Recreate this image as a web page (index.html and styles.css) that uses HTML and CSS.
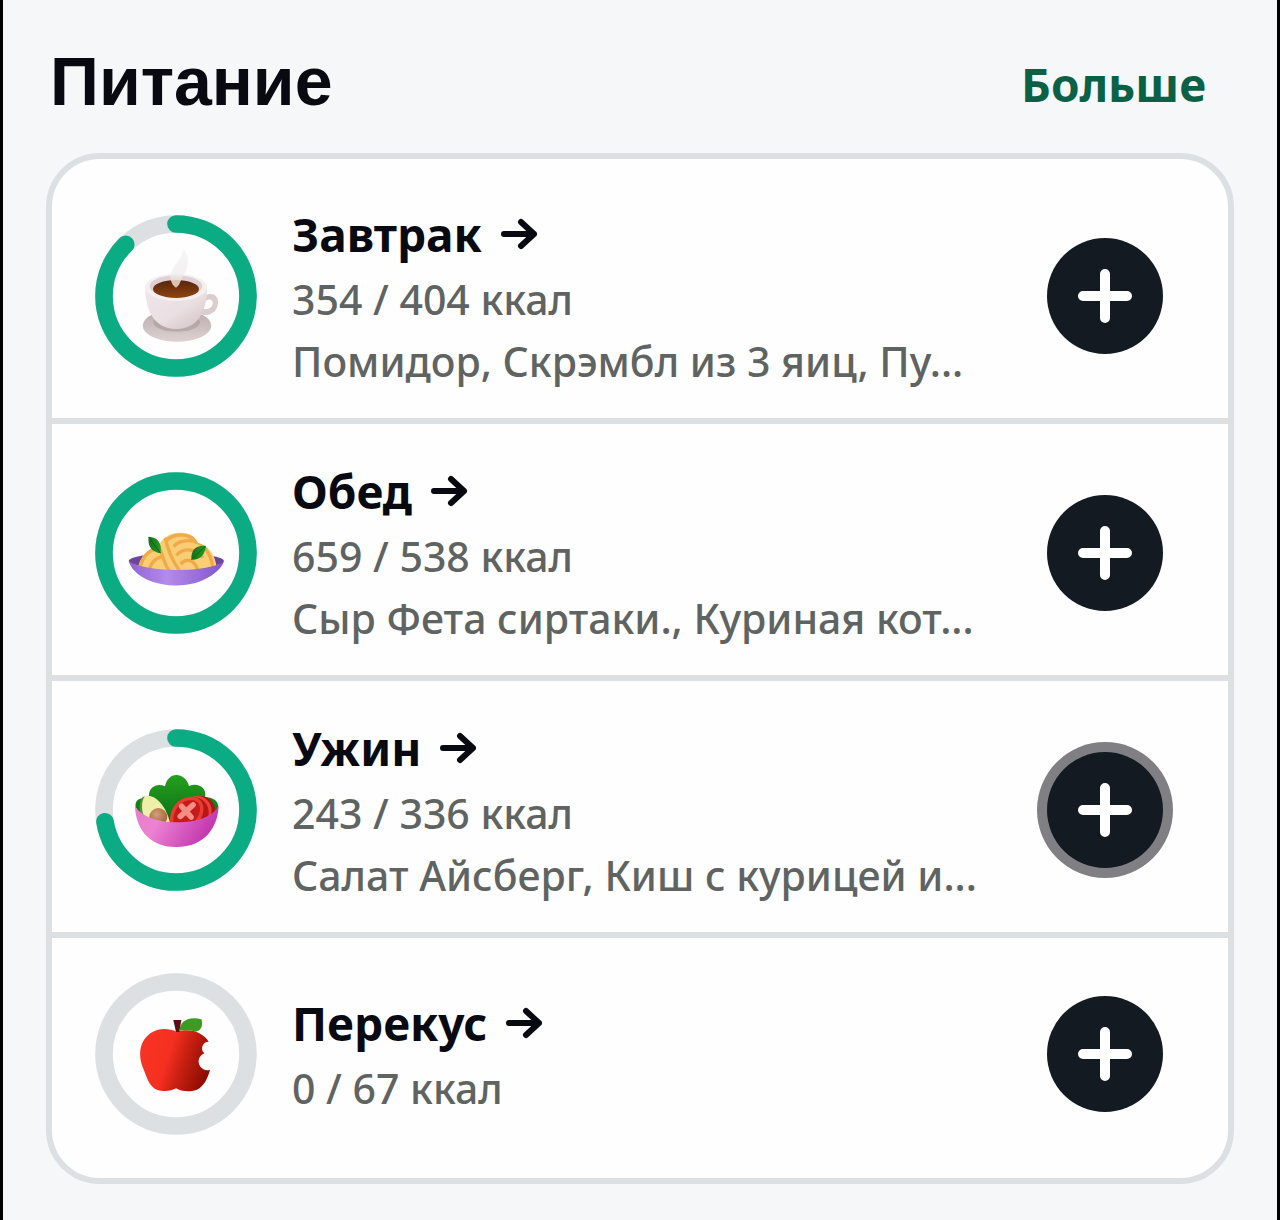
FILE: index.html
```html
<!DOCTYPE html>
<html lang="ru">
  <head>
    <meta charset="utf-8">
    <title>Питание</title>
    <meta name="viewport" content="width=device-width, initial-scale=1">
    <link rel="stylesheet" href="styles.css">
  </head>
  <body>
    <main class="page">
      <header class="header">
        <h1>Питание</h1>
        <a class="more" href="#more">Больше</a>
      </header>
      <section class="meals">
        <article class="meal">
          <svg class="ring" viewBox="0 0 486 486" aria-hidden="true">
            <defs>
              <linearGradient id="cup" x1="0" y1="0" x2="1" y2="1"><stop offset="0" stop-color="#f0e5e8"/><stop offset=".55" stop-color="#eadfe2"/><stop offset="1" stop-color="#cfbfc2"/></linearGradient>
              <linearGradient id="saucer" x1="0" y1="0" x2="0" y2="1"><stop offset="0" stop-color="#b9abac"/><stop offset="1" stop-color="#ddd1d1"/></linearGradient>
              <linearGradient id="coffee" x1="0" y1="0" x2="0" y2="1"><stop offset="0" stop-color="#57250c"/><stop offset="1" stop-color="#8f4510"/></linearGradient>
              <linearGradient id="steam" x1="0" y1="0" x2="0" y2="1"><stop offset="0" stop-color="#f1f0f1" stop-opacity=".5"/><stop offset=".7" stop-color="#efecee" stop-opacity=".8"/><stop offset="1" stop-color="#e0bf98"/></linearGradient>
            </defs>
            <circle class="track" cx="243" cy="243" r="216"/>
            <circle class="progress" cx="243" cy="243" r="216" pathLength="100" stroke-dasharray="87.6 100"/>
            <ellipse cx="246" cy="332" rx="103" ry="48" fill="url(#saucer)"/>
            <ellipse cx="245" cy="322" rx="70" ry="28" fill="#a89a9b" opacity=".6"/>
            <path d="M328 242c24-13 43-1 41 22-2 26-24 42-53 34l8-17c17 4 28-4 29-17 1-11-8-14-21-6z" fill="#dacccf"/>
            <path d="M151 220c0 56 20 122 93 122s92-66 92-122z" fill="url(#cup)"/>
            <ellipse cx="243" cy="217" rx="93" ry="41" fill="#f5eff0"/>
            <ellipse cx="243" cy="214" rx="79" ry="33" fill="#ded0d4"/>
            <ellipse cx="243" cy="222" rx="69" ry="27" fill="url(#coffee)"/>
            <path d="M264 99c2 36-36 51-37 85-1 14 5 28 16 34 10-6 14-20 21-35 13-20 26-50 0-84z" fill="url(#steam)"/>
          </svg>
          <div class="info">
            <h2><a href="#breakfast">Завтрак <svg class="arrow" viewBox="0 0 36 32" aria-hidden="true"><path d="M3 16h30M20 4l13 12-13 12"/></svg></a></h2>
            <p>354 / 404 ккал</p>
            <p>Помидор, Скрэмбл из 3 яиц, Пу...</p>
          </div>
          <button class="add" type="button" aria-label="Добавить завтрак">
            <svg viewBox="0 0 56 56" aria-hidden="true"><path d="M28 6v44M6 28h44"/></svg>
          </button>
        </article>
        <article class="meal">
          <svg class="ring" viewBox="0 0 486 486" aria-hidden="true">
            <defs>
              <linearGradient id="plate"><stop offset="0" stop-color="#8f63d0"/><stop offset=".4" stop-color="#b38be9"/><stop offset="1" stop-color="#8155c9"/></linearGradient>
              <linearGradient id="basil"><stop offset="0" stop-color="#12721a"/><stop offset="1" stop-color="#289b24"/></linearGradient>
              <clipPath id="pile"><path d="M129 286c8-32 28-57 60-63 16-28 40-43 72-40 25 0 39 12 47 29 35 8 55 42 57 76-60 14-181 14-236-2z"/></clipPath>
            </defs>
            <circle class="track" cx="243" cy="243" r="216"/>
            <circle class="progress" cx="243" cy="243" r="216"/>
            <ellipse cx="244" cy="267" rx="143" ry="23" fill="#6c459e"/>
            <g clip-path="url(#pile)">
              <path d="M110 170h270v130H110z" fill="#fbcd76"/>
              <g class="noodles">
                <path d="M133 300c5-44 28-67 61-72M162 300c4-28 20-42 40-46"/>
                <path d="M187 214c13 20 15 53 37 86M210 196c6 28 15 59 43 100M213 207c20-22 65-26 91 0"/>
                <path d="M236 224c15-20 53-23 75-10M244 250c22-24 58-21 80 7M257 276c21-22 44-10 53 24M278 206c44-6 74 43 76 89"/>
              </g>
            </g>
            <path d="M101 267c6 23 28 43 56 56 52 24 128 23 174-2 26-13 50-32 56-54-39 35-232 37-286 0z" fill="url(#plate)"/>
            <path d="M161 194c26 1 40 18 36 50-25-5-40-18-36-50z" fill="url(#basil)"/>
            <path d="M289 263c-1-29 13-44 44-41-3 28-20 43-44 41z" fill="url(#basil)"/>
            <path d="M161 195l35 48M290 262l41-39" fill="none" stroke="#0b6315" stroke-width="3"/>
          </svg>
          <div class="info">
            <h2><a href="#lunch">Обед <svg class="arrow" viewBox="0 0 36 32" aria-hidden="true"><path d="M3 16h30M20 4l13 12-13 12"/></svg></a></h2>
            <p>659 / 538 ккал</p>
            <p>Сыр Фета сиртаки., Куриная кот...</p>
          </div>
          <button class="add" type="button" aria-label="Добавить обед">
            <svg viewBox="0 0 56 56" aria-hidden="true"><path d="M28 6v44M6 28h44"/></svg>
          </button>
        </article>
        <article class="meal">
          <svg class="ring" viewBox="0 0 486 486" aria-hidden="true">
            <defs>
              <linearGradient id="bowl" x1="0" y1="0" x2="1" y2=".3"><stop offset="0" stop-color="#e97ccb"/><stop offset=".35" stop-color="#ed82d2"/><stop offset="1" stop-color="#c236ae"/></linearGradient>
              <linearGradient id="lettuce" x1="0" y1="0" x2="0" y2="1"><stop offset="0" stop-color="#26a01c"/><stop offset="1" stop-color="#076d19"/></linearGradient>
              <radialGradient id="pit" cx=".4" cy=".35" r=".6"><stop offset="0" stop-color="#d4a077"/><stop offset="1" stop-color="#a5683c"/></radialGradient>
            </defs>
            <circle class="track" cx="243" cy="243" r="216"/>
            <circle class="progress" cx="243" cy="243" r="216" pathLength="100" stroke-dasharray="72.3 100"/>
            <path d="M122 235c-3-18 8-29 25-27 8-2 13-5 15-9 0-24 24-38 48-27 4-20 17-34 34-34s33 13 38 33c28-12 55 7 48 34 24-2 45 14 38 34l-28 45H150z" fill="url(#lettuce)"/>
            <ellipse cx="320" cy="244" rx="40" ry="42" fill="#a81715"/>
            <ellipse cx="307" cy="246" rx="43" ry="45" fill="#ed4138"/>
            <ellipse cx="297" cy="249" rx="44" ry="44" fill="#b51616"/>
            <path d="M226 282c-7-37 21-80 65-79 34 2 42 34 27 66-10 19-30 29-50 31z" fill="#ea3b30"/>
            <path d="M235 279c-2-32 19-66 55-66 27 1 31 28 18 51-9 15-23 24-38 27z" fill="#c51c1b"/>
            <path d="M260 232l28 32M294 228l-38 34" fill="none" stroke="#f58d84" stroke-width="17" stroke-linecap="round"/>
            <path d="M143 204c35-11 78 44 84 96h-70c-23-30-31-72-14-96z" fill="#549334"/>
            <path d="M149 202c34-11 75 42 78 98h-60c-25-31-34-74-18-98z" fill="#f0efaa"/>
            <ellipse cx="190" cy="264" rx="27" ry="27" fill="url(#pit)"/>
            <path d="M120 230c1 61 36 124 124 124s126-63 127-126c-23 68-215 70-251 2z" fill="url(#bowl)"/>
          </svg>
          <div class="info">
            <h2><a href="#dinner">Ужин <svg class="arrow" viewBox="0 0 36 32" aria-hidden="true"><path d="M3 16h30M20 4l13 12-13 12"/></svg></a></h2>
            <p>243 / 336 ккал</p>
            <p>Салат Айсберг, Киш с курицей и...</p>
          </div>
          <button class="add active" type="button" aria-label="Добавить ужин">
            <svg viewBox="0 0 56 56" aria-hidden="true"><path d="M28 6v44M6 28h44"/></svg>
          </button>
        </article>
        <article class="meal">
          <svg class="ring" viewBox="0 0 486 486" aria-hidden="true">
            <defs>
              <linearGradient id="apple" x1="0" y1=".3" x2="1" y2=".6"><stop offset="0" stop-color="#f93424"/><stop offset=".4" stop-color="#f53021"/><stop offset=".62" stop-color="#c92112"/><stop offset="1" stop-color="#8c0b00"/></linearGradient>
            </defs>
            <circle class="track" cx="243" cy="243" r="216"/>
            <path d="M245 176c-26-12-57-11-79 5-34 25-37 68-21 106 14 36 21 62 53 66 18 3 35-1 45-7 13 8 34 11 52 7 26-4 42-31 50-63a24 24 0 0 1-17-49 20 20 0 0 1 13-35c-16-27-54-43-96-30z" fill="url(#apple)"/>
            <path d="M235 141h24l-6 36h-10z" fill="#610b12"/>
            <path d="M253 173c2-29 29-44 66-34 7 19-2 35-16 37-18-4-31-5-50-3z" fill="#3c9b22"/>
          </svg>
          <div class="info">
            <h2><a href="#snack">Перекус <svg class="arrow" viewBox="0 0 36 32" aria-hidden="true"><path d="M3 16h30M20 4l13 12-13 12"/></svg></a></h2>
            <p>0 / 67 ккал</p>
          </div>
          <button class="add" type="button" aria-label="Добавить перекус">
            <svg viewBox="0 0 56 56" aria-hidden="true"><path d="M28 6v44M6 28h44"/></svg>
          </button>
        </article>
      </section>
    </main>
  </body>
</html>
```
FILE: styles.css
```css
* {box-sizing: border-box;}
body {margin: 0; background-color: #f5f7f9; color: #080911; font-family: "Noto Sans", sans-serif;}
h1, h2, p {margin: 0;}
a {color: inherit; text-decoration: none;}
.page {min-height: 100vh; padding: 0 43px 36px; border: solid #000; border-width: 0 3px;}
.header {display: flex; align-items: flex-end; justify-content: space-between; padding: 40px 28px 31px 4px;}
.header h1 {font: bold 68px/82px "Liberation Sans", sans-serif;}
.more {color: #0b6146; font-size: 46px; font-weight: bold; line-height: 76px;}

.meals {padding: 8px 0 15px; background-color: #fefefe; border: 6px solid #dce0e3; border-radius: 54px;}
.meal {display: flex; align-items: center; padding: 33px 65px 26px 43px;}
.meal:last-child {padding-top: 35px; padding-bottom: 28px;}
.meal + .meal {border-top: 6px solid #dce0e3;}
.info {flex: 1; min-width: 0; padding: 0 35px;}
.info h2 {font-size: 46px; line-height: 68px;}
.info h2 a {display: flex; align-items: center; gap: 19px;}
.info p {color: #5f6361; font-size: 41px; font-weight: 500; line-height: 62px; white-space: nowrap; overflow: hidden; text-overflow: ellipsis;}
.arrow {width: 36px; height: 32px; fill: none; stroke: currentColor; stroke-width: 6; stroke-linecap: round; stroke-linejoin: round;}

.ring {flex: none; width: 162px; height: 162px;}
.track, .progress {fill: none; stroke: #dce0e3; stroke-width: 53;}
.progress {stroke: #0bac83; stroke-linecap: round; transform: rotate(-90deg); transform-origin: center;}
.noodles {fill: none; stroke: #f0ab48; stroke-width: 10;}

.add {display: flex; flex: none; align-items: center; justify-content: center; width: 116px; height: 116px; padding: 0; border: 0; border-radius: 50%; background-color: #141a21; cursor: pointer;}
.add svg {width: 56px; height: 56px; stroke: #fff; stroke-width: 10; stroke-linecap: round;}
.add.active {box-shadow: 0 0 0 10px #808084;}
```
